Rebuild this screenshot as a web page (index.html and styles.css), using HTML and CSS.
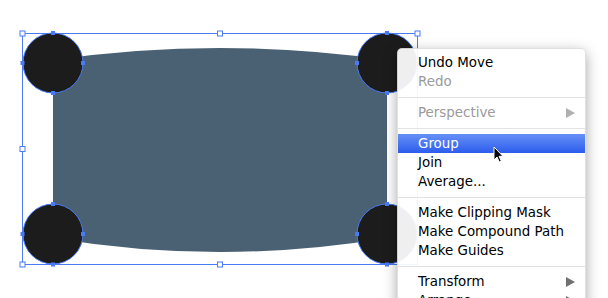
FILE: index.html
```html
<!DOCTYPE html>
<html>
<head>
<meta charset="utf-8">
<link rel="stylesheet" href="styles.css">
</head>
<body>
<div class="stage">
  <svg class="art" width="608" height="298" viewBox="0 0 608 298">
    <rect class="bbox" x="22.5" y="33.5" width="395" height="231"/>
    <path class="shape" d="M53,60 Q220,36 387,60 L387,238 Q220,266 53,238 Z"/>
    <g class="dot">
      <circle cx="53" cy="63" r="30"/>
      <circle cx="387" cy="63" r="30"/>
      <circle cx="53" cy="234" r="30"/>
      <circle cx="387" cy="234" r="30"/>
    </g>
    <g class="anchor">
      <rect x="51" y="31" width="4" height="4"/><rect x="20.5" y="61" width="4" height="4"/><rect x="81" y="61" width="4" height="4"/><rect x="51" y="91" width="4" height="4"/>
      <rect x="385" y="31" width="4" height="4"/><rect x="355" y="61" width="4" height="4"/><rect x="385" y="91" width="4" height="4"/>
      <rect x="51" y="202" width="4" height="4"/><rect x="20.5" y="232" width="4" height="4"/><rect x="81" y="232" width="4" height="4"/><rect x="51" y="262.5" width="4" height="4"/>
      <rect x="385" y="202" width="4" height="4"/><rect x="355" y="232" width="4" height="4"/><rect x="385" y="262.5" width="4" height="4"/>
    </g>
    <g class="handle">
      <rect x="20" y="31" width="5" height="5"/>
      <rect x="217.5" y="31" width="5" height="5"/>
      <rect x="415" y="31" width="5" height="5"/>
      <rect x="20" y="146.5" width="5" height="5"/>
      <rect x="20" y="262" width="5" height="5"/>
      <rect x="217.5" y="262" width="5" height="5"/>
    </g>
  </svg>

  <div class="menu">
    <div class="item">Undo Move</div>
    <div class="item disabled">Redo</div>
    <div class="sep"></div>
    <div class="item disabled sub">Perspective<span class="arrow"></span></div>
    <div class="sep"></div>
    <div class="item active">Group</div>
    <div class="item">Join</div>
    <div class="item">Average...</div>
    <div class="sep"></div>
    <div class="item">Make Clipping Mask</div>
    <div class="item">Make Compound Path</div>
    <div class="item">Make Guides</div>
    <div class="sep"></div>
    <div class="item sub">Transform<span class="arrow"></span></div>
    <div class="item sub">Arrange<span class="arrow"></span></div>
  </div>

  <svg class="cursor" width="12" height="18" viewBox="0 0 12 18">
    <path d="M1,1 L1,14 L4,11 L6.3,16 L8.3,15.1 L6.1,10.3 L10,10.3 Z" fill="#000" stroke="#fff" stroke-width="1" stroke-linejoin="round"/>
  </svg>
</div>
</body>
</html>
```
FILE: styles.css
```css
html, body {
  margin: 0;
  padding: 0;
  background: #fff;
}
.stage {
  position: relative;
  width: 608px;
  height: 298px;
  overflow: hidden;
  font-family: "DejaVu Sans", "Lucida Grande", sans-serif;
}
.art {
  display: block;
}
.bbox {
  fill: none;
  stroke: #4a7bf4;
  stroke-width: 1;
}
.shape {
  fill: #4a6073;
}
.dot circle {
  fill: #1c1c1c;
  stroke: #4a7bf4;
  stroke-width: 1;
}
.anchor rect {
  fill: #4a7bf4;
}
.handle rect {
  fill: #fff;
  stroke: #4a7bf4;
  stroke-width: 1;
}
.menu {
  position: absolute;
  left: 397px;
  top: 48px;
  width: 189px;
  padding: 4px 0;
  background: rgba(255, 255, 255, 0.93);
  border: 1px solid rgba(0, 0, 0, 0.12);
  border-radius: 5px;
  box-sizing: border-box;
  box-shadow: 0 4px 14px rgba(0, 0, 0, 0.35);
  font-size: 13.4px;
  color: #000;
}
.item {
  position: relative;
  height: 19px;
  line-height: 19px;
  padding-left: 20px;
  white-space: nowrap;
}
.item.disabled {
  color: #9a9a9a;
}
.item.active {
  color: #fff;
  background: linear-gradient(#6790f6, #2c5ded);
}
.sep {
  height: 1px;
  margin: 6px 0 5px;
  background: #e2e2e2;
}
.arrow {
  position: absolute;
  right: 10px;
  top: 4.5px;
  width: 0;
  height: 0;
  border-top: 5px solid transparent;
  border-bottom: 5px solid transparent;
  border-left: 9px solid #707070;
}
.disabled .arrow {
  border-left-color: #b0b0b0;
}
.cursor {
  position: absolute;
  left: 493px;
  top: 146px;
}
```
